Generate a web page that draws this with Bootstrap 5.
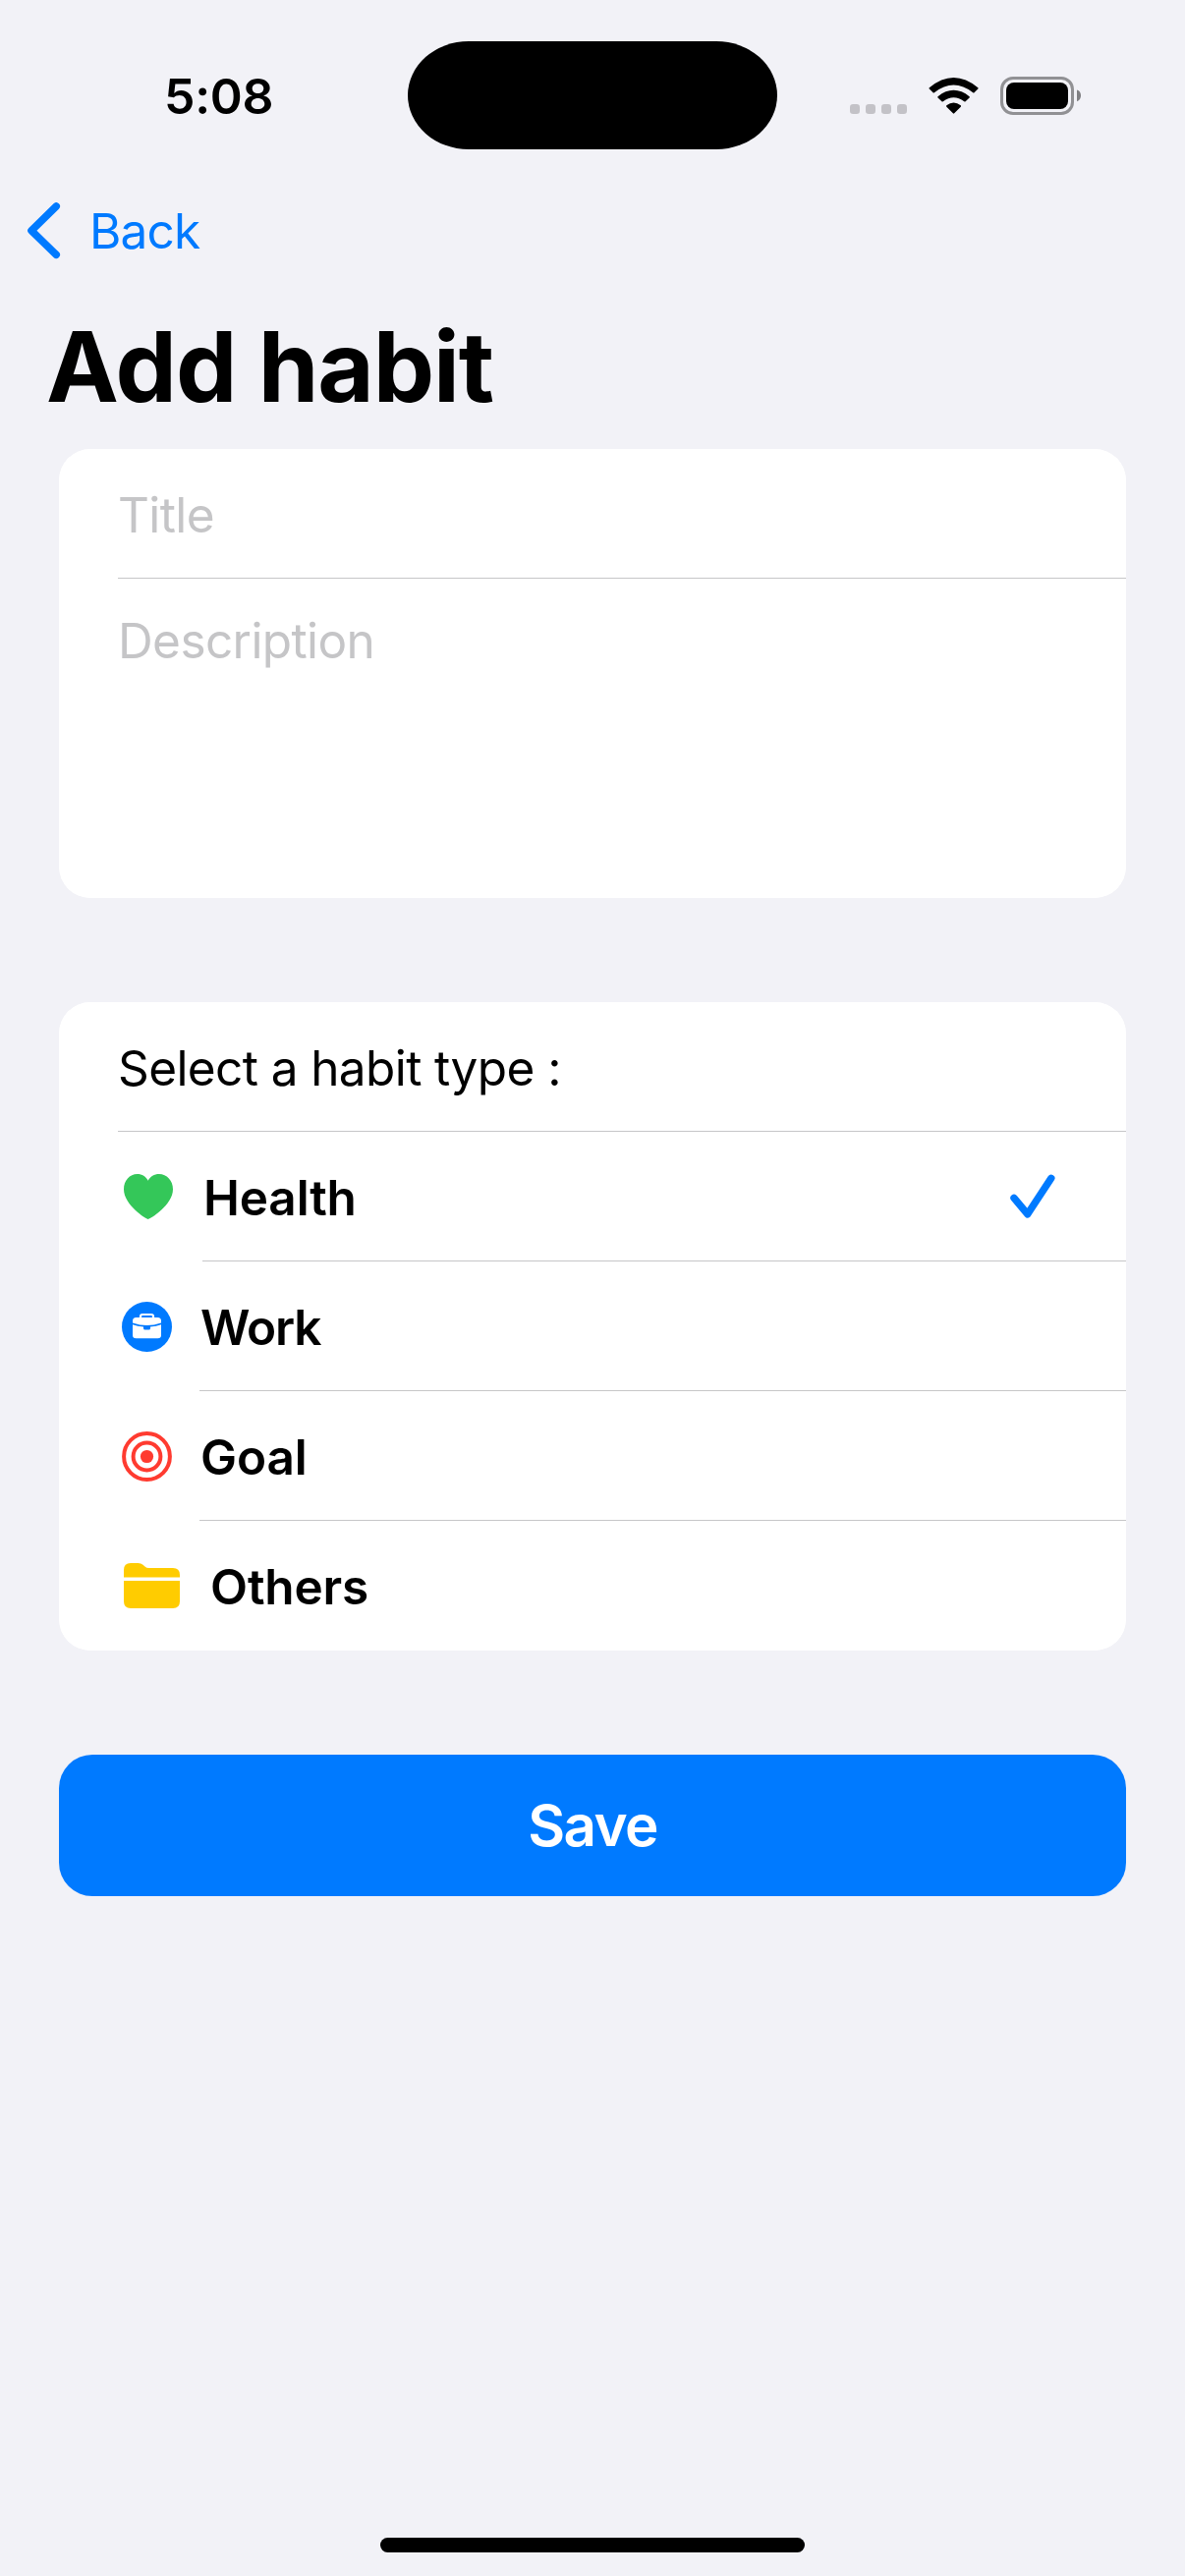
<!DOCTYPE html>
<html lang="en">
<head>
<meta charset="utf-8">
<meta name="viewport" content="width=device-width, initial-scale=1">
<title>Add habit</title>
<link href="https://cdn.jsdelivr.net/npm/bootstrap@5.3.0/dist/css/bootstrap.min.css" rel="stylesheet">
<style>
  body { background: #f2f2f7; color: #000; font-family: Inter, "Liberation Sans", sans-serif; font-size: 49.5px; line-height: 60px; }
  svg { display: block; flex: none; }
  .screen { width: 1206px; height: 2622px; overflow: hidden; }
  .status-bar { height: 180px; }
  .clock { width: 415px; padding: 66px 0 0 167px; font-size: 50px; font-weight: 600; line-height: 64px; letter-spacing: -.29px; }
  .island { width: 376px; height: 110px; margin-top: 42px; background: #000; border-radius: 62px / 55px; }
  .indicators { margin: 77px 0 0 74px; }
  .top-nav { height: 109px; }
  .back-link, .back-link:hover { color: #007aff; letter-spacing: -.8px; padding-left: 28px; }
  .back-link svg { margin-right: 29px; }
  .page-title { margin: 24px 0 24px 47px; font-size: 99px; font-weight: 700; line-height: 120px; letter-spacing: -1.05px; }
  .panel { margin: 0 60px; border: 0; border-radius: 32px; overflow: hidden; background: #fff; }
  .panel .list-group-item { color: #000; border: 0; padding: 0 0 0 60px; letter-spacing: -.6px; background: #fff; }
  .cell { height: 132px; padding-top: 3px; border-bottom: 1px solid #c6c6c8; white-space: pre; }
  .list-group-item:last-child .cell { border-bottom-color: transparent; }
  .field-hint { color: #c5c5c7; }
  .description { height: 325px; padding-top: 33px; }
  .panel-types { margin-top: 106px; }
  .type-label { font-weight: 600; padding-left: 1px; letter-spacing: -.15px; }
  .type-work { letter-spacing: -1.09px; }
  .check { margin: -2px 72px 0 auto; }
  .save-btn, .save-btn:hover { margin: 106px 60px 0; height: 144px; border: 0; border-radius: 34px; background: #007aff; color: #fff; font-size: 58.3px; font-weight: 600; letter-spacing: -1.6px; line-height: 70px; padding: 0; }
  .home-bar { width: 432px; height: 15px; margin-bottom: 24px; border-radius: 8px; background: #000; }
</style>
</head>
<body>
<div class="screen d-flex flex-column">
  <header class="status-bar d-flex align-items-start">
    <div class="clock">5:08</div>
    <div class="island"></div>
    <svg class="indicators" width="238" height="42" viewBox="865 77 238 42">
      <g fill="#c3c2c7">
        <rect x="865" y="106" width="10" height="10" rx="3.2"/>
        <rect x="881" y="106" width="10" height="10" rx="3.2"/>
        <rect x="897" y="106" width="10" height="10" rx="3.2"/>
        <rect x="913" y="106" width="10" height="10" rx="3.2"/>
      </g>
      <path d="M945.8 89.2 Q970.5 68.8 995.3 89.2 Q995.9 89.9 995.3 90.6 L991.5 94.3 Q990.8 94.7 990.2 94.2 Q970.5 78.8 950.9 94.2 Q950.2 94.7 949.6 94.3 L945.8 90.6 Q945.2 89.9 945.8 89.2Z"/>
      <path d="M954.5 98.2 Q970.5 85.5 986.6 98.2 Q987.2 98.9 986.6 99.6 L982.6 103.3 Q982 103.8 981.3 103.3 Q970.5 95.3 959.8 103.3 Q959 103.8 958.5 103.3 L954.5 99.6 Q953.9 98.9 954.5 98.2Z"/>
      <path d="M963.3 107.3 Q970.5 101.8 977.8 107.3 Q978.3 108 977.8 108.7 L971.2 115.3 Q970.5 116 969.9 115.3 L963.3 108.7 Q962.8 108 963.3 107.3Z"/>
      <rect x="1019.5" y="79.5" width="72" height="36" rx="11.5" fill="none" stroke="#919194" stroke-width="3"/>
      <rect x="1024" y="84" width="63" height="27" rx="8"/>
      <path d="M1096 91.5 Q1100 92.8 1100 97.3 Q1100 101.8 1096 103.2Z" fill="#808083"/>
    </svg>
  </header>

  <nav class="top-nav d-flex align-items-center">
    <a href="#" class="back-link d-flex align-items-center text-decoration-none">
      <svg width="34" height="58" viewBox="28 206 34 58"><path d="M57.2 210 L32 234.7 L57.2 259.3" fill="none" stroke="#007aff" stroke-width="7.6" stroke-linecap="round" stroke-linejoin="round"/></svg>
      <span>Back</span>
    </a>
  </nav>

  <h1 class="page-title">Add habit</h1>

  <div class="panel list-group">
    <div class="list-group-item">
      <div class="cell field-hint d-flex align-items-center">Title</div>
    </div>
    <div class="list-group-item">
      <div class="description field-hint">Description</div>
    </div>
  </div>

  <div class="panel panel-types list-group">
    <div class="list-group-item">
      <div class="cell d-flex align-items-center">Select a habit type :</div>
    </div>
    <div class="list-group-item d-flex align-items-center">
      <svg width="86" height="132" viewBox="120 1152 86 132"><path d="M150.7 1241 C149 1241 126 1226.5 126 1210.5 C126 1201.5 132 1195 139.7 1195 C144.6 1195 148.6 1197.6 150.7 1201.7 C152.8 1197.6 157 1195 161.9 1195 C169.7 1195 176 1201.5 176 1210.5 C176 1226.5 152.5 1241 150.7 1241Z" fill="#34c759"/></svg>
      <div class="cell type-label flex-grow-1 d-flex align-items-center">Health<svg class="check" width="46" height="46" viewBox="1027.5 1195.5 46 46"><path d="M1031.5 1219.8 L1045.3 1236.3 L1069.3 1199.8" fill="none" stroke="#007aff" stroke-width="7.4" stroke-linecap="round" stroke-linejoin="round"/></svg></div>
    </div>
    <div class="list-group-item d-flex align-items-center">
      <svg width="83" height="132" viewBox="120 1284 83 132">
        <circle cx="149.5" cy="1350.5" r="25.5" fill="#007aff"/>
        <path d="M143 1342 V1340 Q143 1338 145 1338 H154 Q156 1338 156 1340 V1342" fill="none" stroke="#fff" stroke-width="2.2"/>
        <path d="M138.5 1341 H160.5 Q164 1341 164 1344.5 V1346.5 Q149.5 1351.5 135 1346.5 V1344.5 Q135 1341 138.5 1341Z" fill="#fff"/>
        <path d="M135 1348.2 Q140 1350 146 1350.4 V1352 Q146 1353.5 147.5 1353.5 H151.5 Q153 1353.5 153 1352 V1350.4 Q159 1350 164 1348.2 V1359 Q164 1362.3 160.5 1362.3 H138.5 Q135 1362.3 135 1359Z" fill="#fff"/>
      </svg>
      <div class="cell type-label type-work flex-grow-1 d-flex align-items-center">Work</div>
    </div>
    <div class="list-group-item d-flex align-items-center">
      <svg width="83" height="132" viewBox="120 1416 83 132" fill="none" stroke="#ff3b30" stroke-width="4">
        <circle cx="149.5" cy="1482.5" r="23.4"/>
        <circle cx="149.5" cy="1482.5" r="13.9"/>
        <circle cx="149.5" cy="1482.5" r="6.6" fill="#ff3b30" stroke="none"/>
      </svg>
      <div class="cell type-label flex-grow-1 d-flex align-items-center">Goal</div>
    </div>
    <div class="list-group-item d-flex align-items-center">
      <svg width="93" height="132" viewBox="120 1548 93 132" fill="#ffcc00">
        <path d="M126 1605.5 V1598 Q126 1591 133 1591 H140.5 Q143.5 1591 145.5 1592.8 L147.5 1594.5 Q149 1596 151.5 1596 H176 Q183 1596 183 1603 V1605.5Z"/>
        <path d="M126 1609 H183 V1630 Q183 1637 176 1637 H133 Q126 1637 126 1630Z"/>
      </svg>
      <div class="cell type-label flex-grow-1 d-flex align-items-center">Others</div>
    </div>
  </div>

  <button type="button" class="btn btn-primary save-btn">Save</button>

  <div class="home-bar mt-auto mx-auto"></div>
</div>
<script src="https://cdn.jsdelivr.net/npm/bootstrap@5.3.0/dist/js/bootstrap.bundle.min.js"></script>
</body>
</html>
